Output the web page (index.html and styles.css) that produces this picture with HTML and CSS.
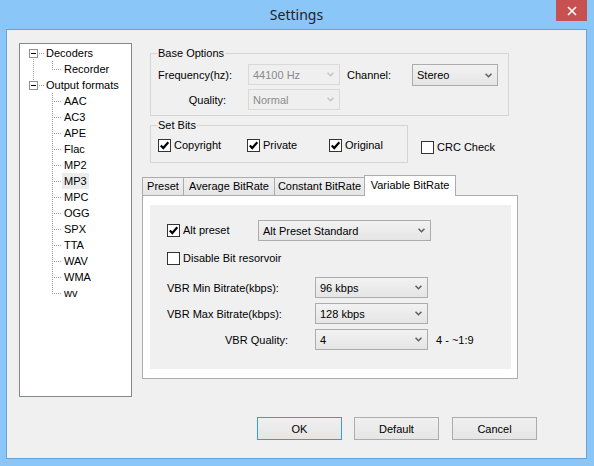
FILE: index.html
```html
<!DOCTYPE html>
<html>
<head>
<meta charset="utf-8">
<title>Settings</title>
<link rel="stylesheet" href="styles.css">
</head>
<body>
<div class="window">
  <div class="titlebar">
    <span class="tb-spacer"></span>
    <span class="title">Settings</span>
    <span class="close"><svg width="10" height="10" viewBox="0 0 10 10"><path d="M1 1L9 9M9 1L1 9" stroke="#fff" stroke-width="1.6" fill="none"/></svg></span>
  </div>
  <div class="client">
    <div class="main">
      <div class="tree">
        <ul class="root">
          <li class="first">
            <div class="row"><span class="toggle"><svg width="9" height="9" viewBox="0 0 9 9"><rect x="0.5" y="0.5" width="8" height="8" fill="#fff" stroke="#919191"/><path d="M2 4.5H7" stroke="#000"/></svg></span><span class="hline root-h"></span><span class="label">Decoders</span></div>
            <ul class="children">
              <li class="last"><div class="row child-row"><span class="hline"></span><span class="label">Recorder</span></div></li>
            </ul>
          </li>
          <li class="last-root">
            <div class="row"><span class="toggle"><svg width="9" height="9" viewBox="0 0 9 9"><rect x="0.5" y="0.5" width="8" height="8" fill="#fff" stroke="#919191"/><path d="M2 4.5H7" stroke="#000"/></svg></span><span class="hline root-h"></span><span class="label">Output formats</span></div>
            <ul class="children">
              <li><div class="row child-row"><span class="hline"></span><span class="label">AAC</span></div></li>
              <li><div class="row child-row"><span class="hline"></span><span class="label">AC3</span></div></li>
              <li><div class="row child-row"><span class="hline"></span><span class="label">APE</span></div></li>
              <li><div class="row child-row"><span class="hline"></span><span class="label">Flac</span></div></li>
              <li><div class="row child-row"><span class="hline"></span><span class="label">MP2</span></div></li>
              <li><div class="row child-row"><span class="hline"></span><span class="label selected">MP3</span></div></li>
              <li><div class="row child-row"><span class="hline"></span><span class="label">MPC</span></div></li>
              <li><div class="row child-row"><span class="hline"></span><span class="label">OGG</span></div></li>
              <li><div class="row child-row"><span class="hline"></span><span class="label">SPX</span></div></li>
              <li><div class="row child-row"><span class="hline"></span><span class="label">TTA</span></div></li>
              <li><div class="row child-row"><span class="hline"></span><span class="label">WAV</span></div></li>
              <li><div class="row child-row"><span class="hline"></span><span class="label">WMA</span></div></li>
              <li class="last"><div class="row child-row"><span class="hline"></span><span class="label">wv</span></div></li>
            </ul>
          </li>
        </ul>
      </div>

      <div class="settings">
        <div class="group base">
          <span class="group-title">Base Options</span>
          <div class="base-row">
            <span class="lbl-freq">Frequency(hz):</span>
            <div class="combo dis w92"><span>44100 Hz</span><svg class="chev" width="7" height="5" viewBox="0 0 7 5"><path d="M0.5 0.7L3.5 3.7L6.5 0.7" fill="none" stroke-width="1.6"/></svg></div>
            <span class="lbl-ch">Channel:</span>
            <div class="combo stereo"><span>Stereo</span><svg class="chev" width="7" height="5" viewBox="0 0 7 5"><path d="M0.5 0.7L3.5 3.7L6.5 0.7" fill="none" stroke-width="1.6"/></svg></div>
          </div>
          <div class="base-row">
            <span class="lbl-q">Quality:</span>
            <div class="combo dis w92"><span>Normal</span><svg class="chev" width="7" height="5" viewBox="0 0 7 5"><path d="M0.5 0.7L3.5 3.7L6.5 0.7" fill="none" stroke-width="1.6"/></svg></div>
          </div>
        </div>

        <div class="bits-row">
          <div class="group bits">
            <span class="group-title">Set Bits</span>
            <div class="check-row">
              <label class="check w-copy"><span class="cb"><svg width="11" height="11" viewBox="0 0 11 11"><path d="M1.8 5.4L4.3 8L9.3 2.3" fill="none" stroke="#000" stroke-width="2.2"/></svg></span>Copyright</label>
              <label class="check w-priv"><span class="cb"><svg width="11" height="11" viewBox="0 0 11 11"><path d="M1.8 5.4L4.3 8L9.3 2.3" fill="none" stroke="#000" stroke-width="2.2"/></svg></span>Private</label>
              <label class="check"><span class="cb"><svg width="11" height="11" viewBox="0 0 11 11"><path d="M1.8 5.4L4.3 8L9.3 2.3" fill="none" stroke="#000" stroke-width="2.2"/></svg></span>Original</label>
            </div>
          </div>
          <label class="check crc"><span class="cb"></span>CRC Check</label>
        </div>

        <div class="tabs">
          <div class="tab t-preset">Preset</div>
          <div class="tab t-avg">Average BitRate</div>
          <div class="tab t-const">Constant BitRate</div>
          <div class="tab t-var sel">Variable BitRate</div>
        </div>
        <div class="tab-panel">
          <div class="vbr">
            <div class="alt-row">
              <label class="check w-alt"><span class="cb"><svg width="11" height="11" viewBox="0 0 11 11"><path d="M1.8 5.4L4.3 8L9.3 2.3" fill="none" stroke="#000" stroke-width="2.2"/></svg></span>Alt preset</label>
              <div class="combo w-altc"><span>Alt Preset Standard</span><svg class="chev" width="7" height="5" viewBox="0 0 7 5"><path d="M0.5 0.7L3.5 3.7L6.5 0.7" fill="none" stroke-width="1.6"/></svg></div>
            </div>
            <div class="dis-row">
              <label class="check"><span class="cb"></span>Disable Bit resorvoir</label>
            </div>
            <div class="vbr-grid">
              <span>VBR Min Bitrate(kbps):</span>
              <div class="combo"><span>96 kbps</span><svg class="chev" width="7" height="5" viewBox="0 0 7 5"><path d="M0.5 0.7L3.5 3.7L6.5 0.7" fill="none" stroke-width="1.6"/></svg></div>
              <span></span>
              <span>VBR Max Bitrate(kbps):</span>
              <div class="combo"><span>128 kbps</span><svg class="chev" width="7" height="5" viewBox="0 0 7 5"><path d="M0.5 0.7L3.5 3.7L6.5 0.7" fill="none" stroke-width="1.6"/></svg></div>
              <span></span>
              <span class="lbl-vq">VBR Quality:</span>
              <div class="combo"><span>4</span><svg class="chev" width="7" height="5" viewBox="0 0 7 5"><path d="M0.5 0.7L3.5 3.7L6.5 0.7" fill="none" stroke-width="1.6"/></svg></div>
              <span class="note">4 - ~1:9</span>
            </div>
          </div>
        </div>
      </div>
    </div>

    <div class="buttons">
      <button class="btn ok">OK</button>
      <button class="btn b-default">Default</button>
      <button class="btn b-cancel">Cancel</button>
    </div>
  </div>
</div>
</body>
</html>
```

FILE: styles.css
```css
html, body {
  margin: 0;
  padding: 0;
}
body {
  font-family: "Liberation Sans", Arial, sans-serif;
  font-size: 11px;
  color: #000;
  background: #8bc6f8;
}
.window {
  width: 594px;
  height: 466px;
  box-sizing: border-box;
  background: #8bc6f8;
  padding: 0 7px 7px 6px;
  display: flex;
  flex-direction: column;
}
.titlebar {
  height: 29px;
  flex-shrink: 0;
  display: flex;
  align-items: flex-start;
}
.tb-spacer {
  width: 31px;
}
.title {
  flex: 1;
  text-align: center;
  font-family: "Noto Sans", "Open Sans", sans-serif;
  font-size: 14px;
  line-height: 29px;
  color: #222;
}
.close {
  width: 31px;
  height: 21px;
  background: #c75050;
  display: flex;
  align-items: center;
  justify-content: center;
}
.client {
  flex: 1;
  background: #f0f0f0;
  border: 1px solid #66a3da;
  display: flex;
  flex-direction: column;
}
.main {
  display: flex;
  align-items: flex-start;
  padding: 13px 0 0 12px;
}

/* tree */
.tree {
  width: 113px;
  height: 354px;
  box-sizing: border-box;
  border: 1px solid #828790;
  background: #fff;
  padding-top: 1px;
  flex-shrink: 0;
}
.tree ul {
  list-style: none;
  margin: 0;
  padding: 0;
}
.tree .root {
  padding-left: 9px;
}
.row {
  display: flex;
  align-items: flex-start;
  height: 16px;
}
.toggle {
  width: 9px;
  height: 9px;
  margin-top: 4px;
  display: flex;
}
.hline {
  height: 1px;
  margin-top: 8px;
  width: 10px;
  background: repeating-linear-gradient(to right, #a0a0a0 0 1px, transparent 1px 2px);
}
.hline.root-h {
  width: 5px;
  margin-left: 1px;
}
.label {
  padding: 0 2px;
  line-height: 16px;
  height: 16px;
  white-space: nowrap;
}
.label.selected {
  background: #ececec;
}
.root > li.first {
  background: repeating-linear-gradient(to bottom, #a0a0a0 0 1px, transparent 1px 2px) 4px 8px / 1px calc(100% - 8px) no-repeat;
}
.root > li.last-root {
  background: repeating-linear-gradient(to bottom, #a0a0a0 0 1px, transparent 1px 2px) 4px 0 / 1px 8px no-repeat;
}
.children > li {
  background: repeating-linear-gradient(to bottom, #a0a0a0 0 1px, transparent 1px 2px) 23px 0 / 1px 100% no-repeat;
}
.children > li.last {
  background-size: 1px 8px;
}
.child-row {
  padding-left: 23px;
}

/* right column */
.settings {
  width: 376px;
  margin-left: 10px;
  margin-top: 10px;
  display: flex;
  flex-direction: column;
}
.group {
  position: relative;
  border: 1px solid #d5d5d5;
  box-sizing: border-box;
}
.group-title {
  position: absolute;
  top: -7px;
  left: 6px;
  padding: 0 1px;
  background: #f0f0f0;
  line-height: 13px;
}
.group.base {
  margin-left: 8px;
  width: 359px;
  padding: 10px 0 5px 7px;
}
.base-row {
  display: flex;
  align-items: center;
  height: 21px;
}
.base-row + .base-row {
  margin-top: 4px;
}
.lbl-freq {
  width: 70px;
  margin-right: 20px;
  white-space: nowrap;
}
.lbl-q {
  width: 68px;
  margin-right: 22px;
  text-align: right;
}
.lbl-ch {
  width: 65px;
  margin-left: 7px;
}

.combo {
  display: flex;
  align-items: center;
  justify-content: space-between;
  height: 21px;
  box-sizing: border-box;
  border: 1px solid #acacac;
  background: linear-gradient(#f2f2f2, #e5e5e5);
  padding: 0 5px 0 4px;
  white-space: nowrap;
}
.combo .chev path {
  stroke: #5f5f5f;
}
.combo.dis {
  border-color: #d9d9d9;
  background: #efefef;
  color: #8a8a8a;
}
.combo.dis .chev path {
  stroke: #c6c6c6;
}
.w92 {
  width: 92px;
}
.combo.stereo {
  width: 86px;
  height: 22px;
  align-self: flex-start;
}

.bits-row {
  display: flex;
  align-items: flex-start;
  margin-top: 9px;
}
.group.bits {
  margin-left: 8px;
  width: 258px;
  height: 38px;
  padding: 13px 0 0 7px;
}
.check-row {
  display: flex;
  align-items: center;
  height: 13px;
}
.check {
  display: flex;
  align-items: center;
  white-space: nowrap;
  line-height: 13px;
}
.cb {
  width: 13px;
  height: 13px;
  box-sizing: border-box;
  border: 1px solid #333;
  background: #fff;
  margin-right: 3px;
  display: flex;
  align-items: center;
  justify-content: center;
  flex-shrink: 0;
}
.w-copy {
  width: 89px;
}
.w-priv {
  width: 82px;
}
.crc {
  margin: 16px 0 0 13px;
}

/* tabs */
.tabs {
  display: flex;
  align-items: flex-end;
  height: 20px;
  margin-top: 12px;
}
.tab {
  height: 18px;
  box-sizing: border-box;
  border: 1px solid #acacac;
  border-bottom: none;
  background: linear-gradient(#f0f0f0, #e5e5e5);
  text-align: center;
  line-height: 17px;
  margin-left: -1px;
  white-space: nowrap;
}
.tab:first-child {
  margin-left: 0;
}
.t-preset { width: 42px; }
.t-avg { width: 92px; }
.t-const { width: 91px; }
.t-var { width: 92px; }
.tab.sel {
  height: 21px;
  background: #fff;
  margin-bottom: -1px;
  position: relative;
  z-index: 1;
  line-height: 19px;
}
.tab-panel {
  border: 1px solid #acacac;
  background: #fff;
  padding: 9px 6px 9px 7px;
}
.vbr {
  background: #f0f0f0;
  height: 164px;
  box-sizing: border-box;
  padding: 15px 0 0 17px;
}
.alt-row {
  display: flex;
  align-items: center;
  height: 21px;
}
.w-alt {
  width: 91px;
}
.w-altc {
  width: 173px;
}
.dis-row {
  margin-top: 11px;
  height: 13px;
  display: flex;
}
.vbr-grid {
  margin-top: 12px;
  display: grid;
  grid-template-columns: 148px 113px auto;
  grid-auto-rows: 21px;
  row-gap: 5px;
  align-items: center;
  white-space: nowrap;
}
.lbl-vq {
  text-align: right;
  padding-right: 27px;
}
.note {
  margin-left: 8px;
}

/* buttons */
.buttons {
  display: flex;
  justify-content: flex-end;
  padding-right: 49px;
  margin-top: 20px;
}
.btn {
  width: 85px;
  height: 23px;
  box-sizing: border-box;
  border: 1px solid #acacac;
  background: linear-gradient(#f0f0f0, #e5e5e5);
  font-family: "Liberation Sans", Arial, sans-serif;
  font-size: 11px;
  color: #000;
  padding: 0;
  margin: 0;
}
.btn.ok {
  border-color: #3399ff;
}
.b-default {
  margin-left: 12px;
}
.b-cancel {
  margin-left: 13px;
}
```
